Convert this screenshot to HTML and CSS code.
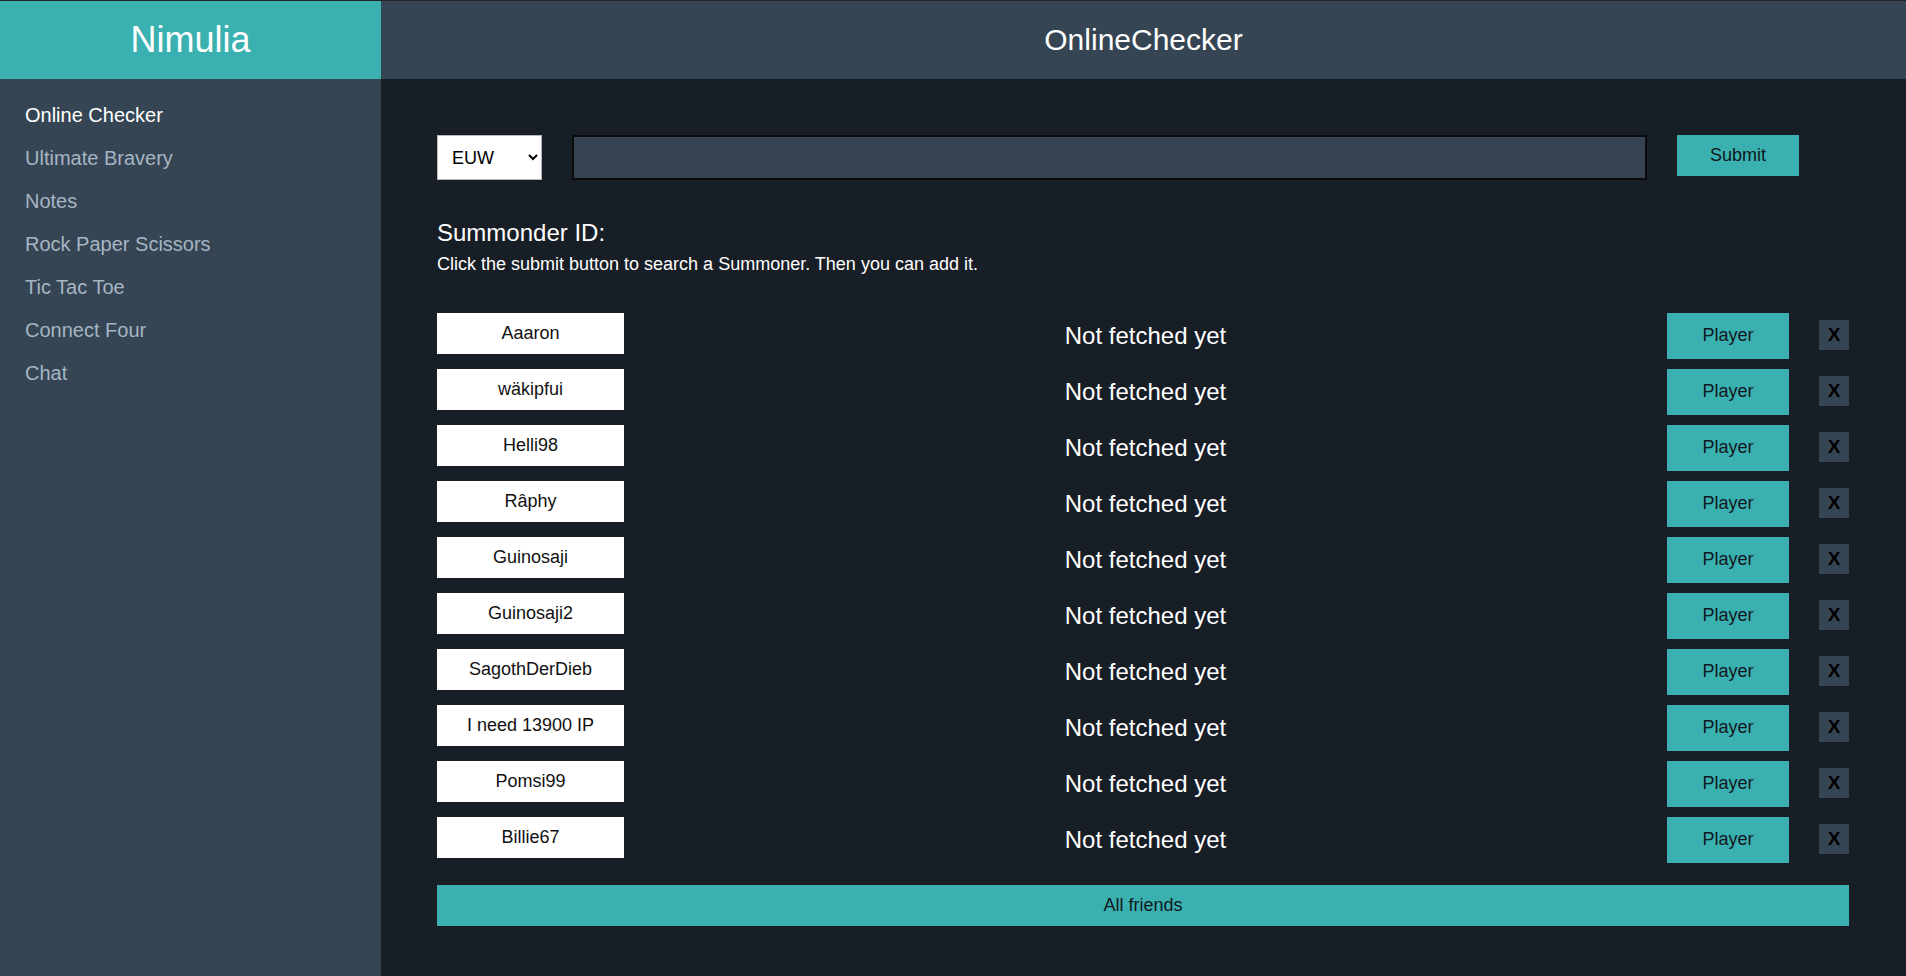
FILE: index.html
```html
<!DOCTYPE html>
<html lang="en">
<head>
<meta charset="utf-8">
<title>Nimulia - OnlineChecker</title>
<link rel="stylesheet" href="styles.css">
</head>
<body>
<div class="app">
  <aside class="sidebar">
    <div class="brand">Nimulia</div>
    <nav class="nav">
      <a class="nav-item active">Online Checker</a>
      <a class="nav-item">Ultimate Bravery</a>
      <a class="nav-item">Notes</a>
      <a class="nav-item">Rock Paper Scissors</a>
      <a class="nav-item">Tic Tac Toe</a>
      <a class="nav-item">Connect Four</a>
      <a class="nav-item">Chat</a>
    </nav>
  </aside>
  <main class="main">
    <header class="topbar">OnlineChecker</header>
    <section class="content">
      <div class="search">
        <select class="region">
          <option>EUW</option>
          <option>NA</option>
          <option>EUNE</option>
        </select>
        <input class="search-input" type="text">
        <button class="btn submit">Submit</button>
      </div>
      <h3 class="label">Summonder ID:</h3>
      <p class="hint">Click the submit button to search a Summoner. Then you can add it.</p>
      <div class="list">
        <div class="row"><div class="name">Aaaron</div><div class="status">Not fetched yet</div><button class="btn player">Player</button><button class="remove">X</button></div>
        <div class="row"><div class="name">wäkipfui</div><div class="status">Not fetched yet</div><button class="btn player">Player</button><button class="remove">X</button></div>
        <div class="row"><div class="name">Helli98</div><div class="status">Not fetched yet</div><button class="btn player">Player</button><button class="remove">X</button></div>
        <div class="row"><div class="name">Râphy</div><div class="status">Not fetched yet</div><button class="btn player">Player</button><button class="remove">X</button></div>
        <div class="row"><div class="name">Guinosaji</div><div class="status">Not fetched yet</div><button class="btn player">Player</button><button class="remove">X</button></div>
        <div class="row"><div class="name">Guinosaji2</div><div class="status">Not fetched yet</div><button class="btn player">Player</button><button class="remove">X</button></div>
        <div class="row"><div class="name">SagothDerDieb</div><div class="status">Not fetched yet</div><button class="btn player">Player</button><button class="remove">X</button></div>
        <div class="row"><div class="name">I need 13900 IP</div><div class="status">Not fetched yet</div><button class="btn player">Player</button><button class="remove">X</button></div>
        <div class="row"><div class="name">Pomsi99</div><div class="status">Not fetched yet</div><button class="btn player">Player</button><button class="remove">X</button></div>
        <div class="row"><div class="name">Billie67</div><div class="status">Not fetched yet</div><button class="btn player">Player</button><button class="remove">X</button></div>
      </div>
      <button class="btn all">All friends</button>
    </section>
  </main>
</div>
</body>
</html>
```

FILE: styles.css
```css
* {
  box-sizing: border-box;
}

html, body {
  margin: 0;
  padding: 0;
}

body {
  font-family: "Liberation Sans", Arial, sans-serif;
  background: #181e26;
  border-top: 1px solid #242424;
  height: 976px;
  overflow: hidden;
}

.app {
  display: flex;
  height: 975px;
}

.sidebar {
  width: 381px;
  flex: none;
  background: #364553;
  display: flex;
  flex-direction: column;
}

.brand {
  height: 78px;
  background: #3ab1b0;
  color: #ffffff;
  font-size: 36px;
  display: flex;
  align-items: center;
  justify-content: center;
}

.nav {
  display: flex;
  flex-direction: column;
  padding-top: 15px;
}

.nav-item {
  display: block;
  padding: 10px 25px;
  font-size: 20px;
  line-height: 23px;
  color: #a6b5c4;
  text-decoration: none;
}

.nav-item.active {
  color: #ffffff;
}

.main {
  flex: 1;
  display: flex;
  flex-direction: column;
  background: #181e26;
}

.topbar {
  height: 78px;
  background: #364553;
  color: #ffffff;
  font-size: 30px;
  display: flex;
  align-items: center;
  justify-content: center;
}

.content {
  padding: 56px 57px 0 56px;
}

.search {
  display: flex;
  align-items: flex-start;
  height: 45px;
}

.region {
  width: 105px;
  height: 45px;
  flex: none;
  font-family: "Liberation Sans", Arial, sans-serif;
  font-size: 18px;
  color: #000;
  background-color: #ffffff;
  border: 1px solid #b8b8b8;
  border-radius: 0;
  padding: 0 8px 0 10px;
}

.search-input {
  width: 1075px;
  height: 45px;
  flex: none;
  margin-left: 30px;
  background: #374453;
  border: 2px solid #0b0b0b;
  border-radius: 0;
  color: #ffffff;
  font-size: 18px;
  padding: 0 10px;
}

.btn {
  font-family: "Liberation Sans", Arial, sans-serif;
  font-size: 18px;
  color: #111820;
  background: #3ab1b0;
  border: none;
  border-radius: 0;
  padding: 0;
  cursor: pointer;
}

.submit {
  width: 122px;
  height: 41px;
  flex: none;
  margin-left: 30px;
}

.label {
  margin: 39px 0 0 0;
  font-size: 24px;
  font-weight: normal;
  line-height: 27.6px;
  color: #ffffff;
}

.hint {
  margin: 7px 0 0 0;
  font-size: 18px;
  line-height: 20.7px;
  color: #ffffff;
}

.list {
  margin-top: 39px;
  display: flex;
  flex-direction: column;
  gap: 10px;
}

.row {
  display: flex;
  align-items: center;
  height: 46px;
}

.name {
  width: 187px;
  height: 41px;
  flex: none;
  align-self: flex-start;
  background: #ffffff;
  color: #111111;
  font-size: 18px;
  display: flex;
  align-items: center;
  justify-content: center;
}

.status {
  flex: 1;
  text-align: center;
  color: #ffffff;
  font-size: 24px;
}

.player {
  width: 122px;
  height: 46px;
  flex: none;
  padding-bottom: 2px;
}

.remove {
  width: 30px;
  height: 30px;
  flex: none;
  margin-left: 30px;
  margin-bottom: 2px;
  background: #364553;
  border: none;
  border-radius: 0;
  padding: 0;
  font-family: "Liberation Sans", Arial, sans-serif;
  font-size: 19px;
  font-weight: bold;
  color: #000000;
}

.all {
  display: block;
  width: 100%;
  height: 41px;
  margin-top: 22px;
}
```
